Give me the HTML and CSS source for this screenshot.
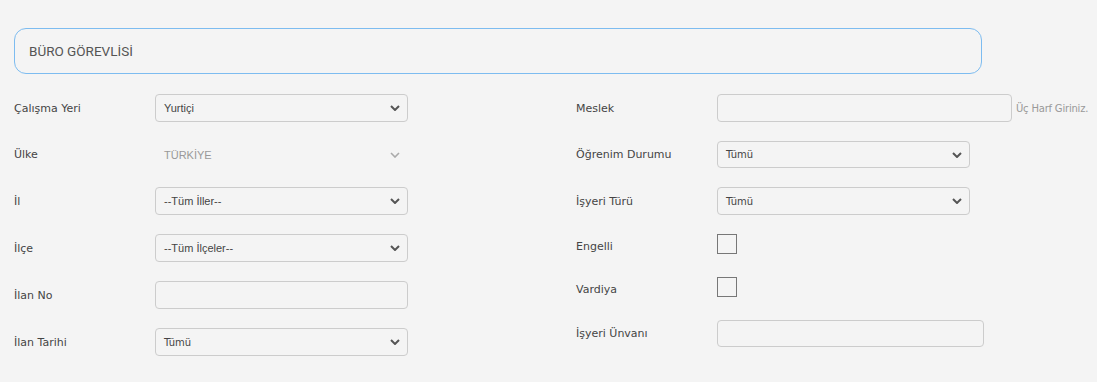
FILE: index.html
```html
<!DOCTYPE html>
<html lang="tr">
<head>
<meta charset="utf-8">
<title>İlan Arama</title>
<link rel="stylesheet" href="styles.css">
</head>
<body>
<div class="page">
  <div class="title-box">BÜRO GÖREVLİSİ</div>
  <div class="form">
    <div class="col">
      <div class="row">
        <label class="lbl">Çalışma Yeri</label>
        <div class="select"><span>Yurtiçi</span><svg class="chev" width="10" height="6" viewBox="0 0 10 6"><polyline points="1,1 5,5 9,1"/></svg></div>
      </div>
      <div class="row row-27">
        <label class="lbl">Ülke</label>
        <div class="select select-plain"><span>TÜRKİYE</span><svg class="chev" width="10" height="6" viewBox="0 0 10 6"><polyline points="1,1 5,5 9,1"/></svg></div>
      </div>
      <div class="row">
        <label class="lbl">İl</label>
        <div class="select"><span>--Tüm İller--</span><svg class="chev" width="10" height="6" viewBox="0 0 10 6"><polyline points="1,1 5,5 9,1"/></svg></div>
      </div>
      <div class="row">
        <label class="lbl">İlçe</label>
        <div class="select"><span>--Tüm İlçeler--</span><svg class="chev" width="10" height="6" viewBox="0 0 10 6"><polyline points="1,1 5,5 9,1"/></svg></div>
      </div>
      <div class="row">
        <label class="lbl">İlan No</label>
        <input class="text-input w-253" type="text">
      </div>
      <div class="row">
        <label class="lbl">İlan Tarihi</label>
        <div class="select select-alt"><span>Tümü</span><svg class="chev" width="10" height="6" viewBox="0 0 10 6"><polyline points="1,1 5,5 9,1"/></svg></div>
      </div>
    </div>
    <div class="col">
      <div class="row">
        <label class="lbl">Meslek</label>
        <input class="text-input w-295" type="text">
        <span class="hint">Üç Harf Giriniz.</span>
      </div>
      <div class="row row-27">
        <label class="lbl">Öğrenim Durumu</label>
        <div class="select select-alt"><span>Tümü</span><svg class="chev" width="10" height="6" viewBox="0 0 10 6"><polyline points="1,1 5,5 9,1"/></svg></div>
      </div>
      <div class="row">
        <label class="lbl">İşyeri Türü</label>
        <div class="select select-alt"><span>Tümü</span><svg class="chev" width="10" height="6" viewBox="0 0 10 6"><polyline points="1,1 5,5 9,1"/></svg></div>
      </div>
      <div class="row row-check">
        <label class="lbl">Engelli</label>
        <span class="checkbox"></span>
      </div>
      <div class="row row-check">
        <label class="lbl">Vardiya</label>
        <span class="checkbox"></span>
      </div>
      <div class="row row-27">
        <label class="lbl">İşyeri Ünvanı</label>
        <input class="text-input w-267" type="text">
      </div>
    </div>
  </div>
</div>
</body>
</html>
```
FILE: styles.css
```css
html, body {
  margin: 0;
  padding: 0;
  background: #f4f4f4;
}

.page {
  padding: 28px 0 0 14px;
}

.title-box {
  box-sizing: border-box;
  width: 968px;
  height: 46px;
  border: 1px solid #7dbcf0;
  border-radius: 12px;
  padding-left: 14px;
  display: flex;
  align-items: center;
  font-family: Roboto, "Liberation Sans", sans-serif;
  font-size: 13.5px;
  color: #555;
}

.form {
  margin-top: 20px;
  display: grid;
  grid-template-columns: 562px 1fr;
}

.col {
  display: flex;
  flex-direction: column;
  gap: 19px;
}

.row {
  display: flex;
  align-items: center;
  height: 28px;
}

.row-27 {
  height: 27px;
}

.row-check {
  height: 24px;
}

.lbl {
  width: 141px;
  flex: none;
  font-family: "DejaVu Sans", Verdana, sans-serif;
  font-size: 11px;
  color: #444;
}

.select {
  box-sizing: border-box;
  width: 253px;
  height: 100%;
  border: 1px solid #ccc;
  border-radius: 4px;
  padding: 0 7px 0 8px;
  display: flex;
  align-items: center;
  justify-content: space-between;
  font-family: "Liberation Sans", Arial, sans-serif;
  font-size: 11px;
  color: #444;
}

.select-alt {
  font-family: "DejaVu Sans", Verdana, sans-serif;
  font-size: 10px;
  color: #444;
}

.select-plain {
  border-color: transparent;
  color: #999;
}

.chev polyline {
  fill: none;
  stroke: #555;
  stroke-width: 2;
}

.select-plain .chev polyline {
  stroke: #aaa;
  stroke-width: 1.6;
}

.text-input {
  box-sizing: border-box;
  height: 100%;
  margin: 0;
  padding: 0 8px;
  border: 1px solid #ccc;
  border-radius: 4px;
  background: transparent;
  font-family: "Liberation Sans", Arial, sans-serif;
  font-size: 11px;
  outline: none;
}

.w-253 { width: 253px; }
.w-295 { width: 295px; }
.w-267 { width: 267px; }

.hint {
  margin-left: 4px;
  font-family: "DejaVu Sans", Verdana, sans-serif;
  font-size: 10px;
  letter-spacing: -0.2px;
  color: #999;
}

.checkbox {
  align-self: flex-start;
  box-sizing: border-box;
  width: 20px;
  height: 20px;
  border: 1px solid #777;
}
```
